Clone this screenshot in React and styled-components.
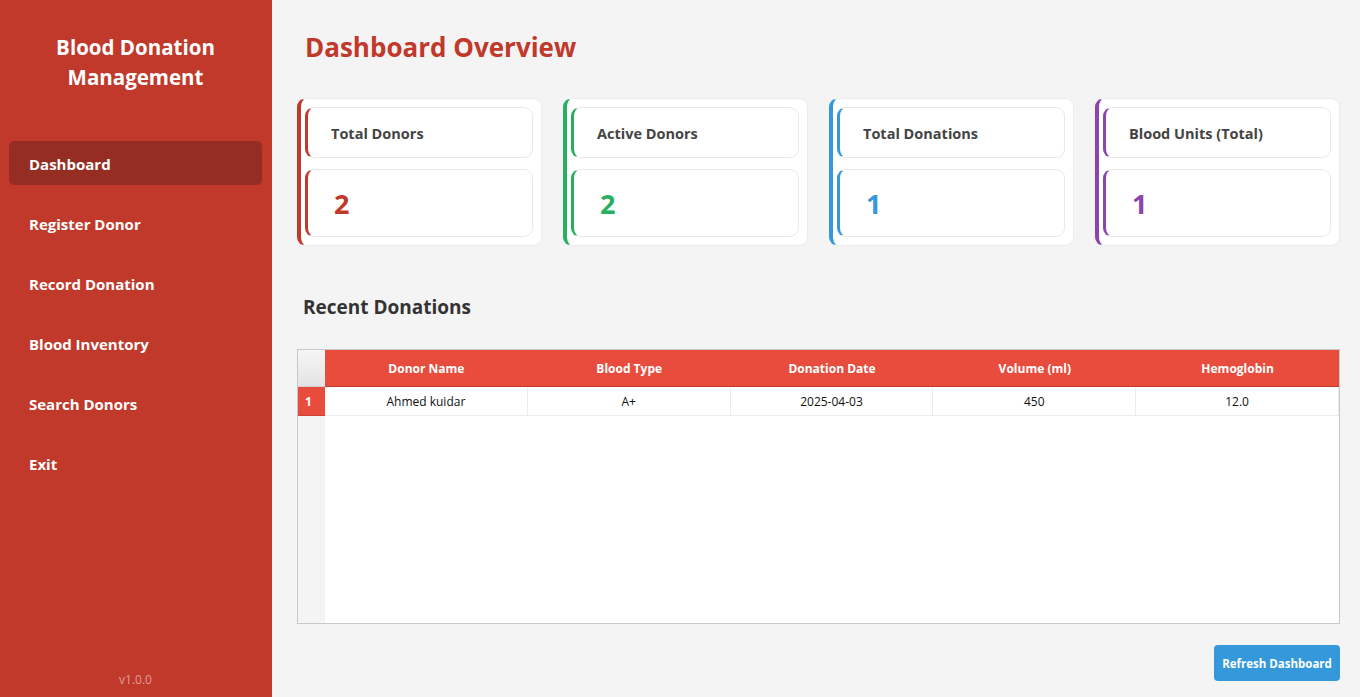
import React from "react";
import styled, { createGlobalStyle } from "styled-components";

const GlobalStyle = createGlobalStyle`
  html, body { margin: 0; padding: 0; height: 100%; }
  body { font-family: "Open Sans", "Noto Sans", sans-serif; background: #f4f4f4; }
  * { box-sizing: border-box; }
`;

const Shell = styled.div`
  display: flex;
  width: 100vw;
  height: 100vh;
  overflow: hidden;
`;

const Sidebar = styled.aside`
  width: 272px;
  flex: 0 0 272px;
  background: #c0392b;
  display: flex;
  flex-direction: column;
  padding: 32px 10px 9px 9px;
`;

const Brand = styled.h1`
  margin: 0 0 49px;
  color: #fff;
  font-size: 20.5px;
  line-height: 30px;
  font-weight: 700;
  text-align: center;
`;

const Nav = styled.nav`
  display: flex;
  flex-direction: column;
  gap: 16px;
`;

const NavItem = styled.div`
  height: 44px;
  display: flex;
  align-items: center;
  padding: 2px 0 0 20px;
  border-radius: 5px;
  color: #fff;
  font-size: 15px;
  font-weight: 700;
  background: ${(p) => (p.$active ? "#962d22" : "transparent")};
`;

const Version = styled.div`
  margin-top: auto;
  text-align: center;
  color: rgba(255, 255, 255, 0.5);
  font-size: 12px;
  line-height: 16px;
`;

const Main = styled.main`
  flex: 1;
  display: flex;
  flex-direction: column;
  padding: 29px 20px 16px 25px;
  min-width: 0;
`;

const Title = styled.h2`
  margin: 0 0 33px 8px;
  color: #c0392b;
  font-size: 26px;
  line-height: 36px;
  font-weight: 700;
`;

const Cards = styled.div`
  display: grid;
  grid-template-columns: repeat(4, 1fr);
  gap: 21px;
  height: 148px;
`;

const Card = styled.div`
  background: #fff;
  border: 1px solid #ececec;
  border-left: 4px solid ${(p) => p.$color};
  border-radius: 9px;
  padding: 8px 8px 8px 4px;
  display: flex;
  flex-direction: column;
  gap: 11px;
`;

const InnerBox = styled.div`
  background: #fff;
  border: 1px solid #e8e8e8;
  border-left: 3px solid ${(p) => p.$color};
  border-radius: 9px;
  display: flex;
  align-items: center;
  padding-left: 23px;
  height: ${(p) => p.$h}px;
  flex: 0 0 auto;
`;

const CardLabel = styled.span`
  color: #444;
  font-size: 14.5px;
  font-weight: 700;
  padding-top: 2px;
`;

const CardValue = styled.span`
  color: ${(p) => p.$color};
  font-size: 27px;
  font-weight: 700;
  padding-left: 3px;
`;

const SectionTitle = styled.h3`
  margin: 48px 0 29px 6px;
  color: #333;
  font-size: 19px;
  line-height: 26px;
  font-weight: 700;
`;

const Table = styled.div`
  flex: 1;
  min-height: 0;
  border: 1px solid #c8c8c8;
  background: #fff;
  display: grid;
  grid-template-columns: 27px repeat(5, 1fr);
  grid-template-rows: 37px 29px 1fr;
`;

const Corner = styled.div`
  background: linear-gradient(#f6f6f6, #e4e4e4);
  border-bottom: 1px solid #d0d0d0;
`;

const HeadCell = styled.div`
  background: #e74c3c;
  border-bottom: 1px solid #c0392b;
  color: #fff;
  font-size: 12px;
  font-weight: 700;
  display: flex;
  align-items: center;
  justify-content: center;
`;

const RowNum = styled.div`
  background: #e74c3c;
  color: #fff;
  font-size: 12px;
  font-weight: 700;
  display: flex;
  align-items: center;
  padding-left: 7px;
  border-bottom: 1px solid #d0433a;
`;

const Cell = styled.div`
  background: #fff;
  color: #111;
  font-size: 12px;
  display: flex;
  align-items: center;
  justify-content: center;
  border-right: 1px solid #ececec;
  border-bottom: 1px solid #ececec;
  &:last-child { border-right: none; }
`;

const FillerGutter = styled.div`
  background: #f4f4f4;
`;

const FillerBody = styled.div`
  grid-column: 2 / span 5;
  background: #fff;
`;

const Footer = styled.div`
  display: flex;
  justify-content: flex-end;
  margin-top: 21px;
`;

const RefreshButton = styled.button`
  height: 36px;
  width: 126px;
  padding: 0;
  background: #3498db;
  color: #fff;
  border: none;
  border-radius: 4px;
  font-family: inherit;
  font-size: 11.5px;
  font-weight: 700;
  cursor: pointer;
`;

const navItems = [
  "Dashboard",
  "Register Donor",
  "Record Donation",
  "Blood Inventory",
  "Search Donors",
  "Exit",
];

const stats = [
  { label: "Total Donors", value: "2", color: "#c0392b" },
  { label: "Active Donors", value: "2", color: "#27ae60" },
  { label: "Total Donations", value: "1", color: "#3498db" },
  { label: "Blood Units (Total)", value: "1", color: "#8e44ad" },
];

const headers = ["Donor Name", "Blood Type", "Donation Date", "Volume (ml)", "Hemoglobin"];
const rows = [["Ahmed kuidar", "A+", "2025-04-03", "450", "12.0"]];

export default function App() {
  return (
    <>
      <GlobalStyle />
      <Shell>
        <Sidebar>
          <Brand>
            Blood Donation
            <br />
            Management
          </Brand>
          <Nav>
            {navItems.map((n, i) => (
              <NavItem key={n} $active={i === 0}>
                {n}
              </NavItem>
            ))}
          </Nav>
          <Version>v1.0.0</Version>
        </Sidebar>
        <Main>
          <Title>Dashboard Overview</Title>
          <Cards>
            {stats.map((s) => (
              <Card key={s.label} $color={s.color}>
                <InnerBox $color={s.color} $h={51}>
                  <CardLabel>{s.label}</CardLabel>
                </InnerBox>
                <InnerBox $color={s.color} $h={68}>
                  <CardValue $color={s.color}>{s.value}</CardValue>
                </InnerBox>
              </Card>
            ))}
          </Cards>
          <SectionTitle>Recent Donations</SectionTitle>
          <Table>
            <Corner />
            {headers.map((h) => (
              <HeadCell key={h}>{h}</HeadCell>
            ))}
            {rows.map((r, i) => (
              <React.Fragment key={i}>
                <RowNum>{i + 1}</RowNum>
                {r.map((c, j) => (
                  <Cell key={j}>{c}</Cell>
                ))}
              </React.Fragment>
            ))}
            <FillerGutter />
            <FillerBody />
          </Table>
          <Footer>
            <RefreshButton>Refresh Dashboard</RefreshButton>
          </Footer>
        </Main>
      </Shell>
    </>
  );
}
